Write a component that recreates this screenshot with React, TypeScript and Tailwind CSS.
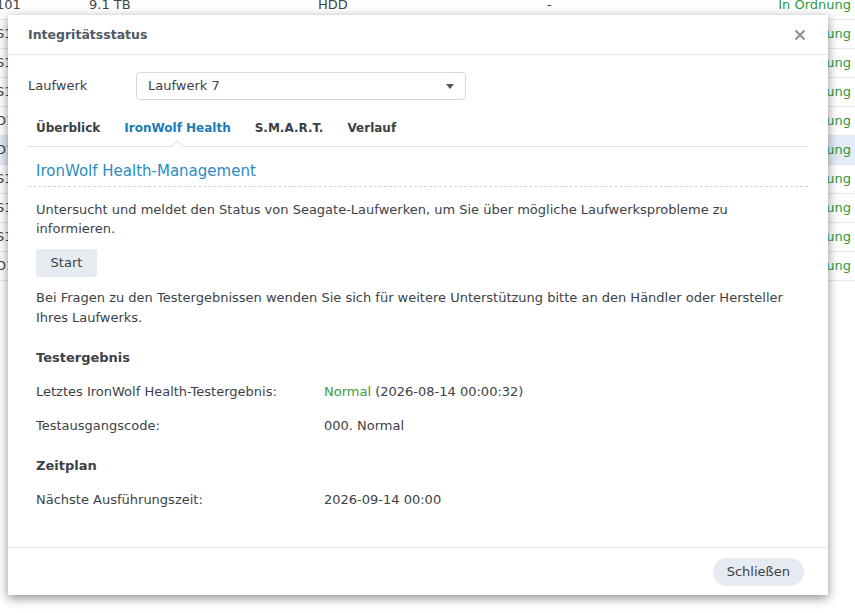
import React from "react";

const font = { fontFamily: '"DejaVu Sans", Verdana, sans-serif' };

const bgRows = ["101", "S1", "S1", "S1", "D1", "D1", "S1", "S1", "S1", "D1"];

function BackgroundTable() {
  return (
    <div className="-mt-[9px]">
      {bgRows.map((id, i) => (
        <div
          key={i}
          className={
            "flex h-[29px] items-center border-b border-[#e6e9ed] text-[13px] text-[#444] " +
            (i === 5 ? "bg-[#e4edf7]" : "bg-white")
          }
        >
          <span className="-ml-[4px] w-[93px]">{id}</span>
          {i === 0 ? (
            <>
              <span className="w-[229px]">9.1 TB</span>
              <span className="w-[229px]">HDD</span>
              <span className="flex-1">-</span>
            </>
          ) : (
            <span className="flex-1" />
          )}
          <span className="pr-[4px] text-[#2e9a3c]">In Ordnung</span>
        </div>
      ))}
    </div>
  );
}

function InfoRow({ label, children }: { label: string; children: React.ReactNode }) {
  return (
    <div className="flex h-[34px] items-center">
      <span className="w-[288px]">{label}</span>
      <span>{children}</span>
    </div>
  );
}

export default function App() {
  const tabs = ["Überblick", "IronWolf Health", "S.M.A.R.T.", "Verlauf"];
  return (
    <div className="relative h-[613px] w-full overflow-hidden bg-white" style={font}>
      <BackgroundTable />

      <div className="absolute left-[8px] top-[15px] flex h-[580px] w-[820px] flex-col bg-white shadow-[0_3px_10px_rgba(0,0,0,0.45)]">
        <div className="flex h-[40px] items-center justify-between border-b border-[#e5e8ec] px-[20px]">
          <span className="pt-[1px] text-[12.5px] font-bold text-[#505a64]">Integritätsstatus</span>
          <svg width="12" height="12" viewBox="0 0 12 12" className="mr-[2px]">
            <path d="M1.5 1.5 L10.5 10.5 M10.5 1.5 L1.5 10.5" stroke="#8a9096" strokeWidth="2" />
          </svg>
        </div>

        <div className="flex-1 px-[20px] text-[13px] text-[#3c4248]">
          <div className="mt-[17px] flex items-center">
            <span className="w-[108px]">Laufwerk</span>
            <div className="flex h-[28px] w-[330px] items-center justify-between rounded-[4px] border border-[#d5dae0] px-[11px]">
              <span>Laufwerk 7</span>
              <svg width="8" height="5" viewBox="0 0 8 5">
                <path d="M0 0 H8 L4 5 Z" fill="#555" />
              </svg>
            </div>
          </div>

          <div className="relative mt-[15px] flex h-[32px] items-center gap-[24px] border-b border-[#dde1e5] pb-[6px] pl-[8px] text-[12px] font-bold">
            {tabs.map((t, i) => (
              <span key={t} className={i === 1 ? "text-[#1b7bb5]" : "text-[#3a4046]"}>
                {t}
              </span>
            ))}
            <div className="absolute bottom-[-5px] left-[145px] h-[9px] w-[9px] rotate-45 border-l border-t border-[#dde1e5] bg-white" />
          </div>

          <div className="flex h-[40px] items-end border-b border-dashed border-[#c9d7e4] pb-[4px] pl-[8px] text-[15px] text-[#2a8cc4]">
            IronWolf Health-Management
          </div>

          <div className="px-[8px]">
            <p className="mt-[13px] leading-[19px]">
              Untersucht und meldet den Status von Seagate-Laufwerken, um Sie über mögliche Laufwerksprobleme zu informieren.
            </p>
            <button className="mt-[11px] h-[28px] w-[61px] rounded-[3px] bg-[#e6ebf1] text-[13px] text-[#3c4248]">
              Start
            </button>
            <p className="mt-[11px] leading-[19.5px]">
              Bei Fragen zu den Testergebnissen wenden Sie sich für weitere Unterstützung bitte an den Händler oder Hersteller Ihres Laufwerks.
            </p>

            <div className="mt-[21px] h-[20px] font-bold">Testergebnis</div>
            <div className="mt-[7px]">
              <InfoRow label="Letztes IronWolf Health-Testergebnis:">
                <span className="text-[#3a9c3f]">Normal</span> (2026-08-14 00:00:32)
              </InfoRow>
              <InfoRow label="Testausgangscode:">000. Normal</InfoRow>
            </div>

            <div className="mt-[13px] h-[20px] font-bold">Zeitplan</div>
            <div className="mt-[7px]">
              <InfoRow label="Nächste Ausführungszeit:">2026-09-14 00:00</InfoRow>
            </div>
          </div>
        </div>

        <div className="flex h-[48px] items-center justify-end border-t border-[#e5e8ec] px-[24px]">
          <button className="h-[28px] rounded-full bg-[#e6ebf1] px-[14px] text-[13px] text-[#3c4248]">
            Schließen
          </button>
        </div>
      </div>
    </div>
  );
}
